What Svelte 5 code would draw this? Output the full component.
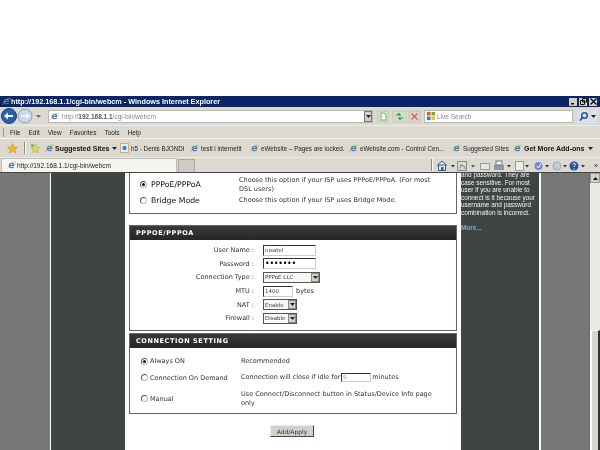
<script>
  const favs = [
    { label: "h5 - Denis BJONDI", w: 70, icon: "page" },
    { label: "testi i internetit", w: 60, icon: "e" },
    { label: "eWebsite – Pages are locked.", w: 99, icon: "e" },
    { label: "eWebsite.com - Control Cen...", w: 103, icon: "e" },
    { label: "Suggested Sites", w: 61, icon: "e" }
  ];
  const fields = [
    { label: "User Name :", kind: "text", value: "nisatel", w: 53 },
    { label: "Password :", kind: "text", value: "•••••••", w: 53, cls: "dots" },
    { label: "Connection Type :", kind: "select", value: "PPPoE LLC", w: 57 },
    { label: "MTU :", kind: "text", value: "1400", w: 30, after: "bytes" },
    { label: "NAT :", kind: "select", value: "Enable", w: 34 },
    { label: "Firewall :", kind: "select", value: "Disable", w: 34 }
  ];
</script>

{#snippet ie(size = 11)}
  <svg width={size} height={size} viewBox="0 0 12 12" class="ico">
    <path d="M9.8 6.8H4.2c.1 1.5 2.6 2 4.2.6l1.2 1c-2.3 2.300-6.800 1.400-7.300-1.800C1.900 3.400 5.300 1.400 8 2.800c1.300.7 2 2.200 1.800 4zM4.200 5.200h3.400C7.400 3.600 4.600 3.600 4.200 5.200z" fill="#2f7fc8"/>
    <path d="M1 10.500C.3 8.500 5 3 9.500 1.500c1.500-.5 2 .5 1.500 2.200" fill="none" stroke="#e0a818" stroke-width=".8"/>
  </svg>
{/snippet}

{#snippet arrow()}
  <svg width="5" height="3" viewBox="0 0 5 3" class="ico"><path d="M0 0h5L2.500 3z" fill="#222"/></svg>
{/snippet}

<div class="page">
  <div class="blank"></div>

  <div class="title">
    {@render ie(9)}
    <span class="title-text">http://192.168.1.1/cgi-bin/webcm - Windows Internet Explorer</span>
    <div class="winbtns">
      <span class="winbtn"><svg width="7" height="7" viewBox="0 0 7 7"><path d="M1 5h3v1.500H1z" fill="#111"/></svg></span>
      <span class="winbtn"><svg width="7" height="7" viewBox="0 0 7 7"><path d="M2.500.5h4v3.500h-4zM.5 2.500h4V6.500h-4z" fill="none" stroke="#111"/></svg></span>
      <span class="winbtn"><svg width="7" height="7" viewBox="0 0 7 7"><path d="M.5.500l6 6M6.500.500l-6 6" stroke="#111" stroke-width="1.400"/></svg></span>
    </div>
  </div>

  <div class="address">
    <svg width="46" height="18" viewBox="0 0 46 18" class="navsvg">
      <circle cx="9" cy="9" r="7.500" fill="#2a62b0" stroke="#16407e"/>
      <path d="M13 8H8V5.500L4 9l4 3.500V10h5z" fill="#fff"/>
      <circle cx="25" cy="9" r="7" fill="#c9d6e4" stroke="#8ca0b6"/>
      <path d="M21 8h5V5.500L30 9l-4 3.500V10h-5z" fill="#eef3f8"/>
      <path d="M36 8h5l-2.500 3z" fill="#55708c"/>
    </svg>
    <div class="urlbox">
      {@render ie(9)}
      <span class="url"><span class="dim">http://</span><b>192.168.1.1</b><span class="dim">/cgi-bin/webcm</span></span>
      <span class="combo">{@render arrow()}</span>
    </div>
    <div class="go">
      <svg width="44" height="13" viewBox="0 0 44 13">
        <rect x="1" y="1" width="10" height="11" fill="#cfe0c4" stroke="#c0ccb4"/>
        <path d="M4 3h3l2 2v5H4z" fill="#f4f8ee" stroke="#68a858" stroke-width=".8"/>
        <rect x="16" y="1" width="13" height="11" fill="#cfe0c4" stroke="#c4ccb8"/>
        <path d="M19 5h4l-1.500-2M26 8h-4l1.500 2" fill="none" stroke="#2a8040" stroke-width="1.200"/>
        <rect x="32" y="1" width="11" height="11" fill="#dcd6cc" stroke="#c8c4ba"/>
        <path d="M34.500 3.500l6 6M40.500 3.500l-6 6" stroke="#d85850" stroke-width="1.200"/>
      </svg>
    </div>
    <div class="searchbox">
      <svg width="10" height="10" viewBox="0 0 11 11" class="ico">
        <path d="M1 1h4v4H1z" fill="#e05a28"/><path d="M6 1h4v4H6z" fill="#72b030"/>
        <path d="M1 6h4v4H1z" fill="#3a78d0"/><path d="M6 6h4v4H6z" fill="#f0c020"/>
      </svg>
      <span class="dim">Live Search</span>
    </div>
    <div class="searchgo">
      <svg width="11" height="11" viewBox="0 0 11 11"><circle cx="6.500" cy="4.500" r="2.800" fill="none" stroke="#2850a0" stroke-width="1.500"/><path d="M4.500 6.500L2 9.500" stroke="#2850a0" stroke-width="1.800"/></svg>
    </div>
    <div class="searchdrop">{@render arrow()}</div>
  </div>

  <div class="menu">
    <span class="grip"></span>
    <span>File</span><span>Edit</span><span>View</span><span>Favorites</span><span>Tools</span><span>Help</span>
  </div>

  <div class="favs">
    <svg width="11" height="11" viewBox="0 0 12 12" class="ico"><path d="M6 .5l1.700 3.600 3.800.5-2.800 2.600.7 3.800L6 9.100l-3.400 1.900.7-3.800L.5 4.600l3.800-.5z" fill="#f2b52c" stroke="#c8862a" stroke-width=".5"/></svg>
    <span class="vsep favsep"></span>
    <svg width="11" height="11" viewBox="0 0 12 12" class="ico"><path d="M6 1l1.500 3.300 3.500.4-2.600 2.400.7 3.500L6 8.900l-3.100 1.700.7-3.500L1 4.700l3.500-.4z" fill="#f0d060" stroke="#9cb040" stroke-width=".6"/><path d="M1 2.500h3M2.500 1v3" stroke="#40a040"/></svg>
    <span class="fav first">{@render ie(9)}<b>Suggested Sites</b><span class="drop">{@render arrow()}</span></span>
    {#each favs as f}
      <span class="fav" style="width: {f.w}px">
        {#if f.icon === "page"}
          <svg width="9" height="10" viewBox="0 0 9 10" class="ico"><rect x=".5" y=".5" width="8" height="9" fill="#e8eef6" stroke="#e8a848"/><circle cx="4.500" cy="5" r="2.200" fill="#3a88c8"/></svg>
        {:else}
          {@render ie(9)}
        {/if}
        {f.label}
      </span>
    {/each}
    <span class="fav">{@render ie(9)}<b>Get More Add-ons</b><span class="drop">{@render arrow()}</span></span>
  </div>

  <div class="tabs">
    <div class="tab">{@render ie(9)}<span>http://192.168.1.1/cgi-bin/webcm</span></div>
    <div class="newtab"></div>
    <div class="tools">
      <span class="vsep"></span>
      <svg width="152" height="13" viewBox="0 0 152 13" class="toolsvg">
        <path d="M0 6.500L5 2l5 4.500M1.500 6v5.500h7V6z" fill="#dfe6ee" stroke="#3c5a84"/><path d="M4 8h2.500v3.500H4z" fill="#3c5a84"/>
        <path d="M14 6h4l-2 2.500z" fill="#333"/>
        <rect x="20.500" y="2.500" width="9" height="9" fill="#d8d8d0" stroke="#8c8c84"/><path d="M23 9.500c0-2 1-3 3-3M23 6c3 0 5 1 5 4" fill="none" stroke="#7c8c7c"/>
        <path d="M34 6h4l-2 2.500z" fill="#555"/>
        <rect x="43.500" y="4.500" width="9" height="6" fill="#e8e8e4" stroke="#9898a0"/>
        <rect x="57" y="6" width="10" height="5" fill="#8898a8"/><rect x="59" y="2" width="6" height="4" fill="#f4f4f4" stroke="#707880"/>
        <path d="M70 6h4l-2 2.500z" fill="#333"/>
        <rect x="78.500" y="2.500" width="8" height="9" fill="#eeeeea" stroke="#98a090"/>
        <path d="M88 6h4l-2 2.500z" fill="#333"/>
        <circle cx="101.500" cy="7" r="4" fill="#7088d0"/><path d="M99.500 7l2 2 2.500-4.500" fill="none" stroke="#fff"/>
        <path d="M108 6h4l-2 2.500z" fill="#333"/>
        <circle cx="120" cy="7" r="4" fill="#c0ccd8" stroke="#9cacc0"/>
        <path d="M126 6h4l-2 2.500z" fill="#333"/>
        <circle cx="137" cy="7" r="4.500" fill="#2a50a8"/><path d="M135.500 5.500c.5-1.500 3-1.500 3 0 0 1-1.500 1-1.500 2.500M137 9.500v1" fill="none" stroke="#fff"/>
        <path d="M144 6h4l-2 2.500z" fill="#333"/>
      </svg>
      <span class="more">»</span>
    </div>
  </div>

  <div class="content">
    <div class="gutter"></div>
    <div class="leftnav"></div>
    <main class="center">
      <section class="box first-box">
        <div class="mode">
          <label class="mode-name"><i class="radio on"></i>PPPoE/PPPoA</label>
          <p>Choose this option if your ISP uses PPPoE/PPPoA. (For most<br />DSL users)</p>
        </div>
        <div class="mode">
          <label class="mode-name"><i class="radio"></i>Bridge Mode</label>
          <p>Choose this option if your ISP uses Bridge Mode.</p>
        </div>
      </section>

      <section class="box pppoe">
        <h2>PPPOE/PPPOA</h2>
        <div class="fields">
          {#each fields as f}
            <span class="flabel">{f.label}</span>
            <span class="fctl">
              <span class="{f.kind} {f.cls ?? ''}" style="width: {f.w}px">
                {f.value}
                {#if f.kind === "select"}<span class="selbtn">{@render arrow()}</span>{/if}
              </span>
              {#if f.after}<span class="after">{f.after}</span>{/if}
            </span>
          {/each}
        </div>
      </section>

      <section class="box conn">
        <h2>CONNECTION SETTING</h2>
        <div class="crow always">
          <label><i class="radio on"></i>Always ON</label>
          <p>Recommended</p>
        </div>
        <div class="crow">
          <label><i class="radio"></i>Connection On Demand</label>
          <p class="idle">Connection will close if idle for <span class="text idlebox">0</span> minutes</p>
        </div>
        <div class="crow manual">
          <label><i class="radio"></i>Manual</label>
          <p>Use Connect/Disconnect button in Status/Device Info page<br />only</p>
        </div>
      </section>

      <div class="apply"><button>Add/Apply</button></div>
    </main>
    <aside class="help">
      <p>and password. They are<br />case sensitive. For most<br />user if you are unable to<br />connect is it because your<br />username and password<br />combination is incorrect.</p>
      <a href="#more">More...</a>
    </aside>
    <div class="rightgray"></div>
    <div class="scrollbar">
      <span class="sbtn"><svg width="5" height="3" viewBox="0 0 5 3"><path d="M0 3h5L2.500 0z" fill="#111"/></svg></span>
      <span class="thumb"></span>
    </div>
  </div>
</div>

<style>
  :global(body) {
    margin: 0;
    background: #fff;
  }
  /* the reference is a soft jpeg, so everything gets a slight blur */
  .page {
    width: 600px;
    height: 450px;
    display: flex;
    flex-direction: column;
    overflow: hidden;
    font-family: "DejaVu Sans", sans-serif;
    font-size: 6.5px;
    color: #222;
    filter: blur(0.3px);
  }
  .blank {
    height: 96px;
    flex: none;
  }
  .ico {
    flex: none;
  }
  .title {
    height: 11px;
    flex: none;
    background: #0a246a;
    display: flex;
    align-items: center;
    padding-left: 2px;
    color: #fff;
  }
  .title-text {
    font-family: "Liberation Sans", sans-serif;
    font-weight: bold;
    font-size: 7.25px;
  }
  .winbtns {
    margin-left: auto;
    margin-right: 3px;
    display: flex;
    gap: 2px;
  }
  .winbtn {
    width: 8px;
    height: 8px;
    background: #d4d0c8;
    display: flex;
    align-items: center;
    justify-content: center;
  }
  .address,
  .menu,
  .favs,
  .tabs {
    font-family: "Liberation Sans", sans-serif;
    background: #dcd9d0;
    flex: none;
    display: flex;
  }
  .address {
    height: 19px;
    align-items: center;
    border-bottom: 1px solid #f0eee8;
    box-sizing: border-box;
    font-size: 6.5px;
  }
  .navsvg {
    flex: none;
    margin-right: 2px;
  }
  .urlbox {
    width: 325px;
    height: 13px;
    box-sizing: border-box;
    background: #fff;
    border: 1px solid #b8b8b0;
    display: flex;
    align-items: center;
    padding-left: 1px;
    gap: 3px;
  }
  .url b {
    font-weight: bold;
    color: #555;
  }
  .dim {
    color: #8a8a8a;
  }
  .combo {
    margin-left: auto;
    width: 8px;
    height: 11px;
    background: #d4d0c8;
    border: 1px solid #777;
    box-sizing: border-box;
    display: flex;
    align-items: center;
    justify-content: center;
  }
  .go {
    margin: 0 3px 0 4px;
    display: flex;
  }
  .searchbox {
    width: 149px;
    height: 13px;
    box-sizing: border-box;
    background: #fff;
    border: 1px solid #b8b8b0;
    display: flex;
    align-items: center;
    padding-left: 1px;
    gap: 1px;
  }
  .searchgo {
    width: 12px;
    height: 13px;
    margin-left: 4px;
    background: #d8e2ec;
    display: flex;
    align-items: center;
    justify-content: center;
  }
  .searchdrop {
    width: 7px;
    height: 13px;
    margin-left: 1px;
    background: #d8e2ec;
    display: flex;
    align-items: center;
    justify-content: center;
  }
  .menu {
    height: 13px;
    align-items: center;
    font-size: 6.5px;
    gap: 8px;
    padding-left: 3px;
    box-sizing: border-box;
    border-bottom: 1px solid #f4f3ee;
  }
  .grip {
    width: 1px;
    height: 9px;
    background: #999;
    margin-right: -2px;
  }
  .favs {
    height: 19px;
    align-items: center;
    padding-left: 7px;
    white-space: nowrap;
    font-size: 6.3px;
    border-bottom: 1px solid #ecebe4;
    box-sizing: border-box;
  }
  .vsep {
    width: 1px;
    height: 12px;
    background: #888;
    box-shadow: 1px 0 #fff;
    flex: none;
  }
  .favsep {
    margin: 0 5px 0 6px;
  }
  .fav {
    display: inline-flex;
    align-items: center;
    gap: 2px;
    flex: none;
    box-sizing: border-box;
  }
  .fav.first {
    width: 75px;
    margin-left: 4px;
    gap: 1px;
  }
  .fav b {
    font-size: 7px;
    color: #111;
  }
  .drop {
    margin-left: 2px;
    display: flex;
  }
  .tabs {
    height: 15px;
    align-items: flex-end;
    border-bottom: 1px solid #444;
    box-sizing: border-box;
    font-size: 6.5px;
  }
  .tab {
    width: 176px;
    height: 14px;
    margin-left: 1px;
    box-sizing: border-box;
    background: #f6f5f0;
    border: 1px solid #bbb;
    border-bottom: none;
    display: flex;
    align-items: center;
    padding-left: 5px;
    gap: 1px;
  }
  .newtab {
    width: 17px;
    height: 13px;
    margin-left: 1px;
    background: #d0ccc4;
    border: 1px solid #aaa;
    border-bottom: none;
    box-sizing: border-box;
  }
  .tools {
    margin-left: auto;
    display: flex;
    align-items: center;
    height: 100%;
    margin-top: -1px;
    padding-right: 2px;
  }
  .toolsvg {
    margin-left: 5px;
    flex: none;
  }
  .more {
    font-size: 7px;
    width: 9px;
    text-align: right;
  }
  .content {
    flex: 1;
    min-height: 0;
    display: flex;
    background: #fff;
    overflow: hidden;
  }
  .gutter {
    width: 50px;
    background: #777;
    border-right: 1px solid #fff;
    flex: none;
  }
  .leftnav {
    width: 74px;
    background: #3f4444;
    flex: none;
  }
  .center {
    width: 336px;
    flex: none;
    box-sizing: border-box;
    padding: 0 4px;
  }
  .box {
    border: 1px solid #666;
    background: #fff;
  }
  .first-box {
    border-top: none;
    height: 41px;
    box-sizing: border-box;
    padding-top: 3px;
  }
  .mode {
    display: flex;
    margin-bottom: 3px;
  }
  .mode-name {
    width: 109px;
    padding-left: 10px;
    box-sizing: border-box;
    font-size: 7.75px;
    font-weight: 500;
    display: flex;
    align-items: center;
    gap: 4px;
    flex: none;
    color: #111;
  }
  p {
    margin: 0;
    line-height: 8.5px;
    color: #333;
  }
  h2 {
    margin: 0;
    height: 14px;
    line-height: 14px;
    background: linear-gradient(#3a3a3a, #262626);
    color: #fff;
    font-size: 6.5px;
    font-weight: bold;
    letter-spacing: 0.6px;
    padding-left: 6px;
  }
  .pppoe {
    margin-top: 11px;
    height: 106px;
    box-sizing: border-box;
  }
  .fields {
    display: grid;
    grid-template-columns: 124px auto;
    column-gap: 9px;
    row-gap: 1.7px;
    padding-top: 4px;
    align-items: center;
  }
  .flabel {
    text-align: right;
    color: #333;
  }
  .fctl {
    display: flex;
    align-items: center;
    height: 12px;
  }
  .text,
  .select {
    display: flex;
    align-items: center;
    box-sizing: border-box;
    height: 11px;
    border: 1px solid;
    border-color: #333 #ccc #ccc #333;
    background: #fff;
    padding-left: 1px;
    font-size: 5.5px;
    color: #444;
  }
  .dots {
    font-size: 8px;
    color: #000;
    letter-spacing: -0.3px;
  }
  .select {
    border-color: #555;
    background: #f8f8f4;
  }
  .selbtn {
    margin-left: auto;
    width: 8px;
    height: 9px;
    background: #d4d0c8;
    border: 1px solid #888;
    box-sizing: border-box;
    display: flex;
    align-items: center;
    justify-content: center;
  }
  .after {
    margin-left: 3px;
  }
  .conn {
    margin-top: 2px;
    height: 81px;
    box-sizing: border-box;
  }
  .crow {
    display: flex;
    align-items: center;
    padding-left: 11px;
    min-height: 17px;
  }
  .always {
    margin-top: 5px;
    min-height: 16px;
  }
  .manual {
    margin-top: 4px;
  }
  .crow label {
    width: 100px;
    flex: none;
    display: flex;
    align-items: center;
    gap: 2px;
    color: #333;
  }
  .idle {
    display: flex;
    align-items: center;
    gap: 1px;
  }
  .idlebox {
    width: 30px;
    height: 9px;
    color: #999;
  }
  .radio {
    width: 7px;
    height: 7px;
    box-sizing: border-box;
    border-radius: 50%;
    border: 1px solid;
    border-color: #555 #bbb #bbb #555;
    background: #fff;
    flex: none;
    position: relative;
  }
  .radio.on::after {
    content: "";
    position: absolute;
    inset: 1px;
    border-radius: 50%;
    background: #111;
  }
  .apply {
    display: flex;
    justify-content: center;
    margin-top: 11px;
    padding-right: 2px;
  }
  button {
    width: 44px;
    height: 12px;
    padding: 0;
    font: 6px "DejaVu Sans", sans-serif;
    color: #333;
    background: #d4d0c8;
    border: 1px solid;
    border-color: #eee #444 #444 #eee;
  }
  .help {
    width: 80px;
    flex: none;
    box-sizing: border-box;
    background: #3f4444;
    color: #fff;
    overflow: hidden;
    border-right: 2px solid #fff;
    font-family: "Liberation Sans", sans-serif;
    font-size: 6.4px;
  }
  .help p {
    color: #f2f2f2;
    line-height: 7.5px;
    margin-top: -2px;
    white-space: nowrap;
  }
  .help a {
    display: block;
    margin-top: 8px;
    color: #7fb0cc;
    font-weight: bold;
    text-decoration: none;
  }
  .rightgray {
    width: 48px;
    flex: none;
    background: #777;
    border-right: 1px solid #6a6a6a;
  }
  .scrollbar {
    flex: 1;
    background: #e9e9e4;
    display: flex;
    flex-direction: column;
  }
  .sbtn {
    display: flex;
    height: 10px;
    flex: none;
    align-items: center;
    justify-content: center;
    background: #d4d0c8;
    border: 1px solid #999;
    box-sizing: border-box;
  }
  .thumb {
    margin-top: auto;
    height: 120px;
    box-sizing: border-box;
    background: #d8d5cc;
    border-left: 2px solid #fff;
    border-right: 2px solid #333;
    border-top: 1px solid #fff;
  }
</style>
